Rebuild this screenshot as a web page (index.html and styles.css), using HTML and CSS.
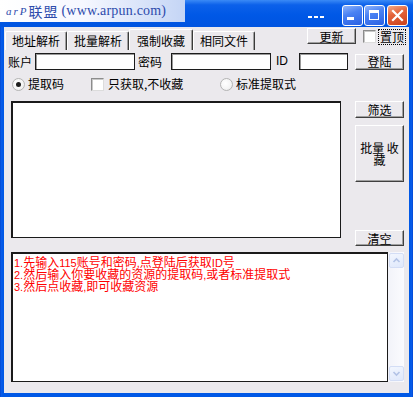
FILE: index.html
```html
<!DOCTYPE html>
<html lang="zh">
<head>
<meta charset="utf-8">
<link rel="stylesheet" href="styles.css">
</head>
<body>
<div class="window">
  <div class="titlebar">
    <div class="brand"><span class="brand-arp">arP</span><span class="brand-cn">联盟</span><span class="brand-url">(www.arpun.com)</span></div>
    <div class="title-dots"><span></span><span></span><span></span></div>
    <div class="ctl ctl-min"><svg width="19" height="19" viewBox="0 0 19 19"><rect x="4" y="11" width="7" height="3" fill="#fff"/></svg></div>
    <div class="ctl ctl-max"><svg width="19" height="19" viewBox="0 0 19 19"><rect x="4.5" y="4.5" width="9" height="9" fill="none" stroke="#fff" stroke-width="1"/><rect x="4" y="4" width="10" height="3" fill="#fff"/></svg></div>
    <div class="ctl ctl-close"><svg width="19" height="19" viewBox="0 0 19 19"><path d="M5 5 L14 14 M14 5 L5 14" stroke="#fff" stroke-width="2.2" stroke-linecap="square"/></svg></div>
  </div>
  <div class="frame">
    <div class="client">
      <div class="toprow">
        <div class="tabs">
          <div class="tab tab-first">地址解析</div>
          <div class="tab">批量解析</div>
          <div class="tab tab-active">强制收藏</div>
          <div class="tab">相同文件</div>
        </div>
        <div class="btn btn-update">更新</div>
        <span class="check check-top"></span>
        <span class="focus-label">置顶</span>
      </div>
      <div class="login-row">
        <span class="lbl lbl-acc">账户</span>
        <span class="input input-acc"></span>
        <span class="lbl lbl-pwd">密码</span>
        <span class="input input-pwd"></span>
        <span class="lbl lbl-id">ID</span>
        <span class="input input-id"></span>
        <span class="btn btn-login">登陆</span>
      </div>
      <div class="option-row">
        <div class="opt opt-code"><span class="radio radio-on"></span><span class="opt-text">提取码</span></div>
        <div class="opt opt-only"><span class="check"></span><span class="opt-text opt-text-check">只获取,不收藏</span></div>
        <div class="opt opt-std"><span class="radio"></span><span class="opt-text">标准提取式</span></div>
      </div>
      <div class="mid">
        <div class="listbox"></div>
        <div class="side">
          <div class="btn btn-filter">筛选</div>
          <div class="btn btn-batch">批量 收藏</div>
          <div class="btn btn-clear">清空</div>
        </div>
      </div>
      <div class="log">
        <div class="log-text">
          <div class="log-line"><span class="lat">1.</span>先输入<span class="lat">115</span>账号和密码<span class="lat">,</span>点登陆后获取<span class="lat">ID</span>号</div>
          <div class="log-line"><span class="lat">2.</span>然后输入你要收藏的资源的提取码<span class="lat">,</span>或者标准提取式</div>
          <div class="log-line"><span class="lat">3.</span>然后点收藏<span class="lat">,</span>即可收藏资源</div>
        </div>
        <div class="scrollbar">
          <div class="sb-btn"><svg width="13" height="13" viewBox="0 0 13 13"><path d="M3.5 8 L6.5 5 L9.5 8" fill="none" stroke="#b3c3e6" stroke-width="1.6"/></svg></div>
          <div class="sb-track"></div>
          <div class="sb-btn"><svg width="13" height="13" viewBox="0 0 13 13"><path d="M3.5 5 L6.5 8 L9.5 5" fill="none" stroke="#b3c3e6" stroke-width="1.6"/></svg></div>
        </div>
      </div>
    </div>
  </div>
</div>
</body>
</html>
```
FILE: styles.css
```css
* { box-sizing: border-box; }
html, body { margin: 0; padding: 0; }
body {
  width: 413px;
  height: 397px;
  overflow: hidden;
  font-family: "Noto Sans CJK SC", "Noto Sans", sans-serif;
  font-size: 12px;
  color: #000;
}
.window {
  width: 413px;
  height: 397px;
  display: flex;
  flex-direction: column;
  background: #0055e5;
}
.titlebar {
  flex: none;
  height: 27px;
  display: flex;
  align-items: flex-start;
  padding-right: 5px;
  background: linear-gradient(180deg, #3a8af6 0%, #0c61ea 18%, #0058e6 55%, #0054e0 100%);
}
.brand {
  width: 185px;
  height: 22px;
  display: flex;
  align-items: center;
  padding-left: 6px;
  white-space: nowrap;
  color: #2d4bac;
  background: linear-gradient(90deg, #ffffff 0%, #f6f8ff 45%, #c4d5f5 100%);
}
.brand-arp {
  font-family: "Liberation Serif", serif;
  font-style: italic;
  font-size: 11px;
  letter-spacing: 2px;
}
.brand-cn {
  font-family: "Noto Sans CJK SC", sans-serif;
  font-size: 14px;
  letter-spacing: 1px;
}
.brand-url {
  font-family: "Liberation Serif", serif;
  font-size: 14px;
  margin-left: 3px;
  letter-spacing: 0.2px;
}
.title-dots {
  margin-left: auto;
  margin-right: 18px;
  margin-top: 16px;
  display: flex;
  gap: 2px;
}
.title-dots span {
  width: 4px;
  height: 2px;
  background: #fff;
}
.ctl {
  width: 21px;
  height: 21px;
  margin-top: 5px;
  border: 1px solid #fff;
  border-radius: 3px;
  background: linear-gradient(160deg, #8fb4fb 0%, #4a82f3 40%, #2a60e3 100%);
}
.ctl svg { display: block; }
.ctl-max { margin-left: 1px; }
.ctl-close {
  margin-left: 2px;
  background: linear-gradient(160deg, #f3ab86 0%, #e4633a 40%, #c9411c 100%);
}
.frame {
  flex: 1;
  display: flex;
  padding: 0 4px 4px 4px;
  background: linear-gradient(90deg, #0041c8 0, #0a5cea 1px, #0058e6 3px, #0058e6 calc(100% - 3px), #0a5cea calc(100% - 1px), #0041c8 100%);
}
.client {
  flex: 1;
  display: flex;
  flex-direction: column;
  background: #ebe9ed;
}
.toprow {
  height: 23px;
  display: flex;
  align-items: flex-start;
  padding-right: 3px;
}
.tabs {
  height: 23px;
  display: flex;
  align-items: flex-end;
  margin-left: 1px;
}
.tab {
  height: 19px;
  padding: 0 6px;
  line-height: 18px;
  border-top: 1px solid #fff;
  border-left: 1px solid #fff;
  border-right: 1px solid #3a3a3a;
  border-radius: 2px 2px 0 0;
  box-shadow: inset -1px 0 #a0a0a0;
  white-space: nowrap;
}
.tab-active {
  height: 21px;
  padding: 0 7px;
  line-height: 21px;
}
.btn {
  display: flex;
  align-items: center;
  justify-content: center;
  text-align: center;
  background: #ebe9ed;
  border: 1px solid;
  border-color: #fff #404040 #404040 #fff;
  box-shadow: inset -1px -1px #a0a0a0;
  white-space: nowrap;
}
.btn-update {
  margin-left: auto;
  margin-top: 1px;
  width: 49px;
  height: 16px;
}
.check {
  flex: none;
  display: inline-block;
  width: 13px;
  height: 13px;
  background: #fff;
  border: 1px solid;
  border-color: #8c8c8c #dcdcdc #dcdcdc #8c8c8c;
  box-shadow: inset 1px 1px #c8c8c8;
}
.check-top {
  margin-left: 7px;
  margin-top: 3px;
}
.focus-label {
  margin-left: 2px;
  margin-top: 2px;
  width: 28px;
  height: 16px;
  line-height: 14px;
  border: 1px dotted #000;
  text-align: center;
}
.login-row {
  margin-top: 3px;
  height: 17px;
  display: flex;
  align-items: center;
}
.lbl {
  line-height: 17px;
  white-space: nowrap;
}
.lbl-acc { margin-left: 4px; width: 24px; }
.lbl-pwd { margin-left: 3px; width: 24px; }
.lbl-id { margin-left: 5px; width: 12px; font-family: "Liberation Sans", sans-serif; }
.input {
  height: 17px;
  background: #fff;
  border: 1px solid #1c1c1c;
  box-shadow: inset 1px 1px #9a9a9a;
}
.input-acc { margin-left: 3px; width: 100px; }
.input-pwd { margin-left: 9px; width: 100px; }
.input-id { margin-left: 11px; width: 49px; }
.btn-login {
  margin-left: 7px;
  width: 49px;
  height: 16px;
}
.option-row {
  margin-top: 6px;
  height: 16px;
  display: flex;
  align-items: center;
}
.opt {
  display: flex;
  align-items: center;
  white-space: nowrap;
}
.opt-code { margin-left: 8px; width: 79px; }
.opt-only { width: 129px; }
.opt-text { margin-left: 3px; line-height: 16px; }
.opt-text-check { margin-left: 4px; }
.radio {
  flex: none;
  display: inline-block;
  width: 13px;
  height: 13px;
  border-radius: 50%;
  border: 1px solid #b4b4b4;
  background: radial-gradient(circle at 40% 40%, #ffffff 0%, #f4f4f4 60%, #dedede 100%);
  position: relative;
}
.radio-on::after {
  content: "";
  position: absolute;
  left: 3px;
  top: 3px;
  width: 5px;
  height: 5px;
  border-radius: 50%;
  background: #1e1e1e;
}
.mid {
  margin-top: 9px;
  height: 145px;
  display: flex;
  align-items: flex-start;
}
.listbox {
  margin-left: 7px;
  width: 330px;
  height: 137px;
  background: #fff;
  border-style: solid;
  border-color: #1a1a1a;
  border-width: 2px 1px 1px 2px;
}
.side {
  margin-left: 14px;
  width: 49px;
  height: 145px;
  display: flex;
  flex-direction: column;
}
.btn-filter { height: 17px; }
.btn-batch {
  margin-top: 7px;
  height: 57px;
  padding: 0 2px;
  white-space: normal;
  line-height: 12px;
}
.btn-clear {
  margin-top: auto;
  height: 16px;
}
.log {
  margin-top: 6px;
  margin-left: 7px;
  width: 393px;
  height: 130px;
  display: flex;
}
.log-text {
  flex: 1;
  background: #fff;
  border-style: solid;
  border-color: #1a1a1a;
  border-width: 2px 1px 1px 2px;
  padding: 2px 0 0 1px;
  color: #ff0000;
  white-space: nowrap;
}
.log-line {
  height: 12px;
  line-height: 12px;
}
.lat {
  font-family: "Liberation Sans", sans-serif;
  font-size: 11px;
}
.scrollbar {
  width: 16px;
  display: flex;
  flex-direction: column;
  padding: 1px 0 1px 1px;
  background: linear-gradient(90deg, #f2f3f9 0%, #fbfbfe 100%);
}
.sb-btn {
  height: 15px;
  display: flex;
  align-items: center;
  justify-content: center;
  border: 1px solid #d3ddf5;
  border-radius: 2px;
  background: linear-gradient(160deg, #f2f6fe 0%, #dfe8fb 100%);
}
.sb-btn svg { display: block; }
.sb-track { flex: 1; }
```
